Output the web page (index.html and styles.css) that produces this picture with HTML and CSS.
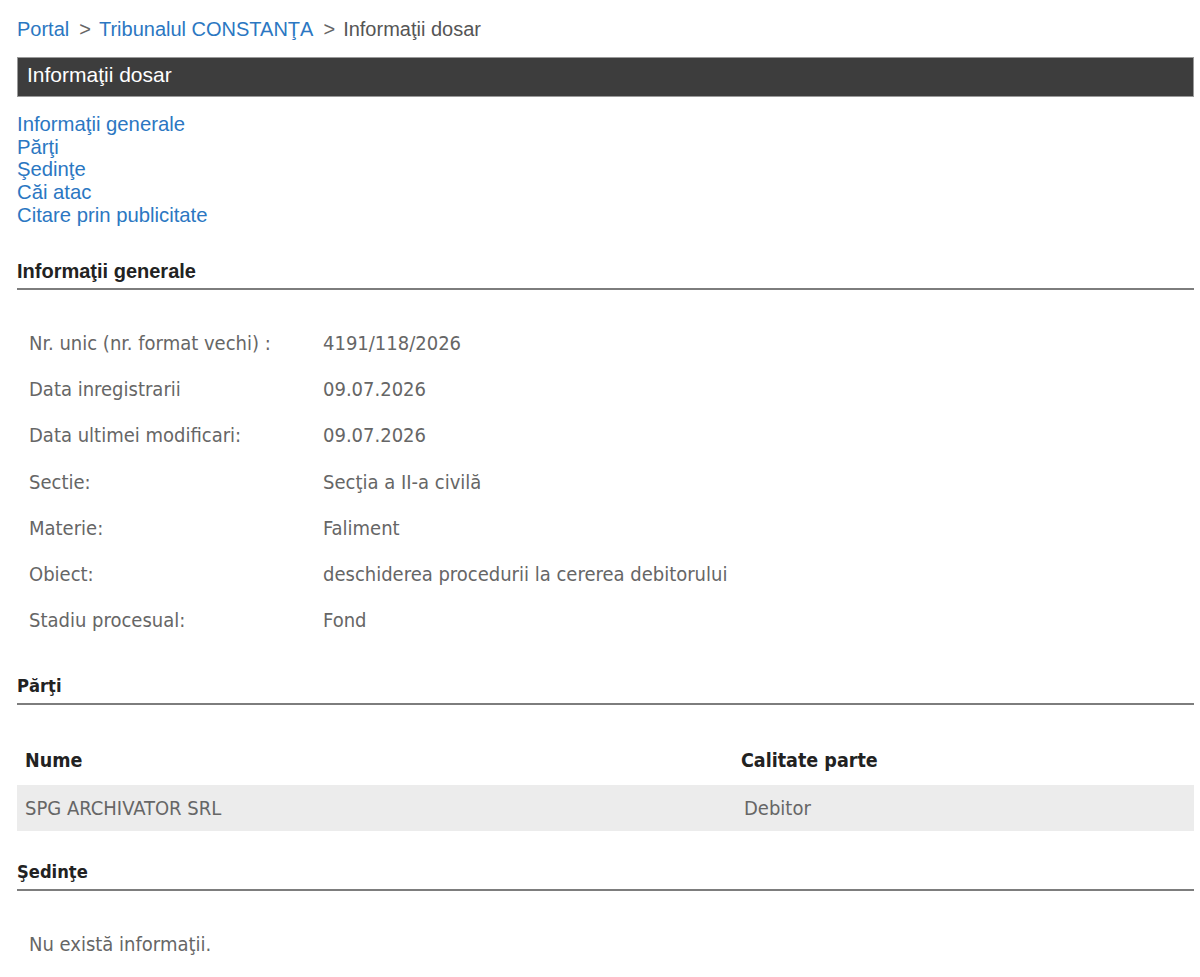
FILE: index.html
```html
<!DOCTYPE html>
<html lang="ro">
  <head>
    <meta charset="UTF-8" />
    <title>Informaţii dosar</title>
    <link rel="stylesheet" href="styles.css">
  </head>
  <body>
    <div class="page">
      <div class="breadcrumb">
        <a href="#">Portal</a><span class="sep">&gt;</span><a href="#">Tribunalul CONSTANŢA</a><span class="sep">&gt;</span><span>Informaţii dosar</span>
      </div>

      <div class="title-bar">Informaţii dosar</div>

      <ul class="toc">
        <li><a href="#generale">Informaţii generale</a></li>
        <li><a href="#parti">Părţi</a></li>
        <li><a href="#sedinte">Şedinţe</a></li>
        <li><a href="#cai">Căi atac</a></li>
        <li><a href="#citare">Citare prin publicitate</a></li>
      </ul>

      <h3 id="generale" class="section-title">Informaţii generale</h3>
      <table class="info">
        <tr><td class="lbl">Nr. unic (nr. format vechi) :</td><td>4191/118/2026</td></tr>
        <tr><td class="lbl">Data inregistrarii</td><td>09.07.2026</td></tr>
        <tr><td class="lbl">Data ultimei modificari:</td><td>09.07.2026</td></tr>
        <tr><td class="lbl">Sectie:</td><td>Secţia a II-a civilă</td></tr>
        <tr><td class="lbl">Materie:</td><td>Faliment</td></tr>
        <tr><td class="lbl">Obiect:</td><td>deschiderea procedurii la cererea debitorului</td></tr>
        <tr><td class="lbl">Stadiu procesual:</td><td>Fond</td></tr>
      </table>

      <h3 id="parti" class="section-title alt">Părţi</h3>
      <table class="parties">
        <tr><th class="col-name">Nume</th><th>Calitate parte</th></tr>
        <tr class="shade"><td>SPG ARCHIVATOR SRL</td><td>Debitor</td></tr>
      </table>

      <h3 id="sedinte" class="section-title alt">Şedinţe</h3>
      <p class="empty">Nu există informaţii.</p>
    </div>
  </body>
</html>
```

FILE: styles.css
```css
:root {
  --link: #2b77c2;
  --text: #666666;
  --dark: #3d3d3d;
  --rule: #7d7d7d;
  --shade: #ececec;
  --arial: 'Liberation Sans', Arial, sans-serif;
  --tahoma: 'DejaVu Sans Condensed', 'DejaVu Sans', sans-serif;
}

* {
  box-sizing: border-box;
}

body {
  margin: 0;
  background: #ffffff;
  font-family: var(--arial);
  color: var(--text);
}

.page {
  padding: 18px 6px 20px 17px;
}

a {
  color: var(--link);
  text-decoration: none;
}

.breadcrumb {
  font-size: 20px;
  line-height: 22px;
  color: #555555;
}

.breadcrumb .sep {
  padding: 0 8px 0 10px;
  color: #666666;
}

.title-bar {
  margin-top: 17px;
  height: 40px;
  padding: 0 9px;
  background: var(--dark);
  border: 1px solid #9a9a9a;
  color: #ffffff;
  font-size: 21px;
  line-height: 34px;
}

.toc {
  list-style: none;
  margin: 16px 0 0;
  padding: 0;
  font-size: 20.3px;
  line-height: 22.7px;
}

.section-title {
  margin: 0;
  padding-bottom: 6px;
  border-bottom: 2px solid var(--rule);
  color: #222222;
  font-size: 20px;
  line-height: 22px;
  font-weight: bold;
}

#generale {
  margin-top: 33px;
}

.section-title.alt {
  font-family: var(--tahoma);
  font-size: 18.2px;
}

.info,
.parties {
  width: 100%;
  border-collapse: collapse;
  font-family: var(--tahoma);
  font-size: 20px;
  color: var(--text);
}

.info {
  margin: 30px 0 31px;
}

.info td {
  height: 46.3px;
  padding: 0 12px;
  vertical-align: middle;
}

.info td.lbl {
  width: 294px;
}

.parties {
  margin: 32px 0 30px;
}

.parties th {
  height: 48px;
  padding: 0 8px;
  text-align: left;
  color: #222222;
  font-size: 19.5px;
  font-weight: bold;
}

.parties th.col-name {
  width: 716px;
}

.parties td {
  height: 46px;
  padding: 0 8px;
}

.parties tr.shade td {
  background: var(--shade);
}

.parties tr.shade td + td {
  padding-left: 11px;
}

.empty {
  margin: 41px 0 0;
  padding-left: 12px;
  font-family: var(--tahoma);
  font-size: 20px;
  color: var(--text);
}
```
